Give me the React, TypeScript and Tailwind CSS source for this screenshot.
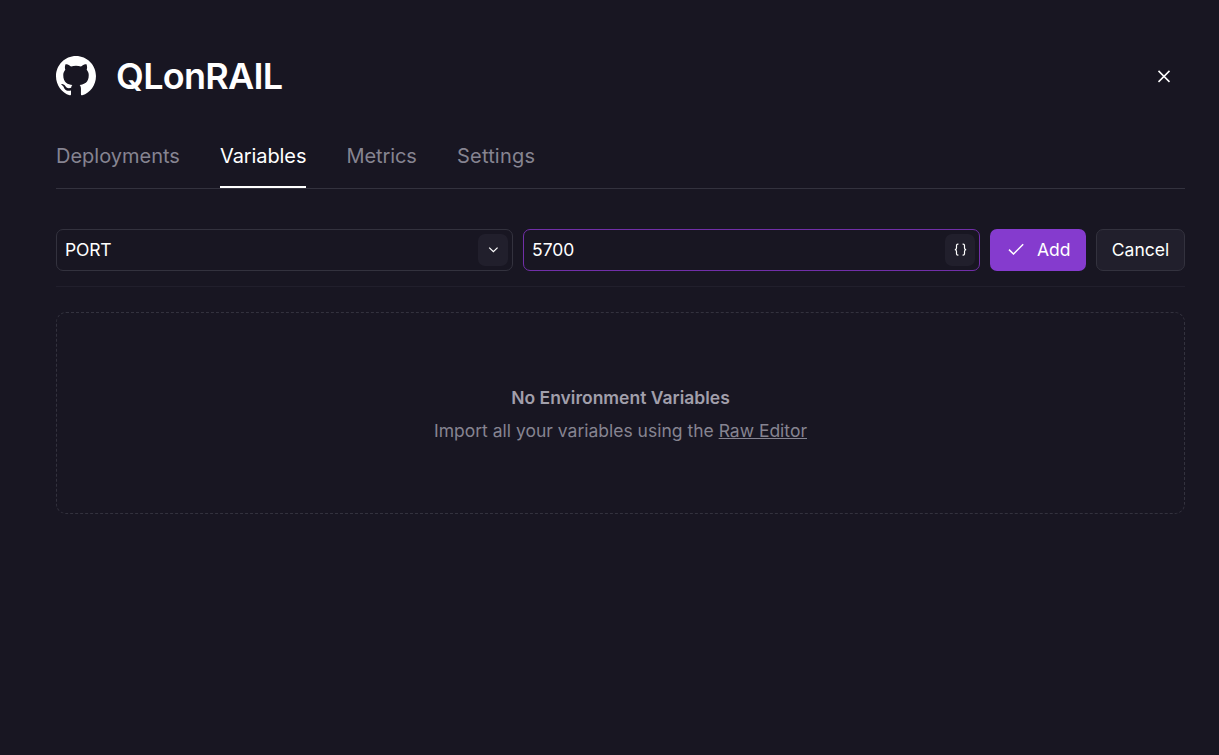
import React from "react";

const tabs = [
  { label: "Deployments", width: "w-[124px]" },
  { label: "Variables", width: "w-[86px] tracking-[-0.1px]" },
  { label: "Metrics", width: "ml-[0.6px] w-[70px] tracking-[-0.1px]" },
  { label: "Settings", width: "ml-[0.4px] w-[78px] tracking-[0.2px]" },
];

function GithubMark() {
  return (
    <svg className="size-10" viewBox="0 0 97.7 97.7" fill="currentColor" aria-hidden="true">
      <path
        fillRule="evenodd"
        d="M48.854 0C21.839 0 0 22 0 49.217c0 21.756 13.993 40.172 33.405 46.69 2.427.49 3.316-1.059 3.316-2.362 0-1.141-.08-5.052-.08-9.127-13.59 2.934-16.42-5.867-16.42-5.867-2.184-5.704-5.42-7.17-5.42-7.17-4.448-3.015.324-3.015.324-3.015 4.934.326 7.523 5.052 7.523 5.052 4.367 7.496 11.404 5.378 14.235 4.074.404-3.178 1.699-5.378 3.074-6.6-10.839-1.141-22.243-5.378-22.243-24.283 0-5.378 1.94-9.778 5.014-13.2-.485-1.222-2.184-6.275.486-13.038 0 0 4.125-1.304 13.426 5.052a46.97 46.97 0 0 1 12.214-1.63c4.125 0 8.33.571 12.213 1.63 9.302-6.356 13.427-5.052 13.427-5.052 2.67 6.763.97 11.816.485 13.038 3.155 3.422 5.015 7.822 5.015 13.2 0 18.905-11.404 23.06-22.324 24.283 1.78 1.548 3.316 4.481 3.316 9.126 0 6.6-.08 11.897-.08 13.526 0 1.304.89 2.853 3.316 2.364 19.412-6.52 33.405-24.935 33.405-46.691C97.707 22 75.788 0 48.854 0z"
      />
    </svg>
  );
}

export default function App() {
  return (
    <main className="min-h-[755px] bg-[#181622] pt-14 pr-[34px] pl-14 font-['Inter',sans-serif] text-white">
      <header className="flex h-10 items-center">
        <GithubMark />
        <h1 className="ml-5 text-[36px] leading-10 font-semibold tracking-[-0.7px] whitespace-nowrap">QLonRAIL</h1>
        <button aria-label="Close" className="mr-[14px] ml-auto flex size-[14px] items-center justify-center">
          <svg className="size-[14px]" viewBox="0 0 14 14" fill="none" stroke="currentColor" strokeWidth="1.5">
            <path d="M1.5 1.9 12.5 12.9M12.5 1.9 1.5 12.9" />
          </svg>
        </button>
      </header>

      <nav className="mt-10 flex h-[53px] gap-10 border-b border-[#33323e] text-xl leading-10">
        {tabs.map((tab) => (
          <a
            key={tab.label}
            className={`${tab.width} h-[52px] whitespace-nowrap ${
              tab.label === "Variables" ? "border-b-2 border-white text-white" : "text-[#868491]"
            }`}
          >
            {tab.label}
          </a>
        ))}
      </nav>

      <section className="mt-10 flex h-[58px] items-start gap-[10px] border-b border-[#211f2c] text-[17.5px]">
        <div className="flex h-[42px] flex-1 items-center justify-between rounded-[7px] border border-[#33323e] pr-1 pl-2">
          <span className="tracking-[-0.2px]">PORT</span>
          <button aria-label="Choose a name" className="flex h-8 w-[30px] items-center justify-center rounded-[7px] bg-[#211f2c]">
            <svg className="size-[10px]" viewBox="0 0 10 10" fill="none" stroke="currentColor" strokeWidth="1.3">
              <path d="M1.2 2.6 5.4 6.7 9.6 2.6" />
            </svg>
          </button>
        </div>
        <div className="flex h-[42px] flex-1 items-center justify-between rounded-[7px] border border-[#712fa8] pr-1 pl-2">
          <span>5700</span>
          <button aria-label="Insert reference" className="flex h-8 w-[30px] items-center justify-center rounded-[7px] bg-[#211f2c]">
            <svg className="h-[14px] w-[14px]" viewBox="0 0 14 14" fill="none" stroke="currentColor" strokeWidth="1.2">
              <path d="M5.4 1.2H4.9Q3.5 1.2 3.5 2.6V4.9Q3.5 6.5 1.9 6.7 3.5 6.9 3.5 8.5v2.3Q3.5 12.2 4.9 12.2h.5M9.6 1.2h.5q1.4 0 1.4 1.4v2.3Q11.5 6.5 13.1 6.7 11.5 6.9 11.5 8.5v2.3q0 1.4-1.4 1.4h-.5" />
            </svg>
          </button>
        </div>
        <button className="flex h-[42px] w-24 items-center rounded-[7px] bg-[#853bce] pl-[18px]">
          <svg className="-mt-0.5 h-3 w-4" viewBox="0 0 16 12" fill="none" stroke="currentColor" strokeWidth="1.5">
            <path d="M1 6.6 5.5 11 15.2 1.2" />
          </svg>
          <span className="ml-[13px]">Add</span>
        </button>
        <button className="h-[42px] w-[89px] rounded-[7px] border border-[#33323e] bg-[#211f2c]">Cancel</button>
      </section>

      <section className="mt-[25px] flex h-[202px] flex-col items-center justify-center rounded-[10px] border border-dashed border-[#33323e] pt-0.5 text-[17.5px]">
        <h2 className="leading-7 font-semibold text-[#a19fab]">No Environment Variables</h2>
        <p className="mt-[5px] leading-7 text-[#868491]">
          Import all your variables using the <a className="underline">Raw Editor</a>
        </p>
      </section>
    </main>
  );
}
